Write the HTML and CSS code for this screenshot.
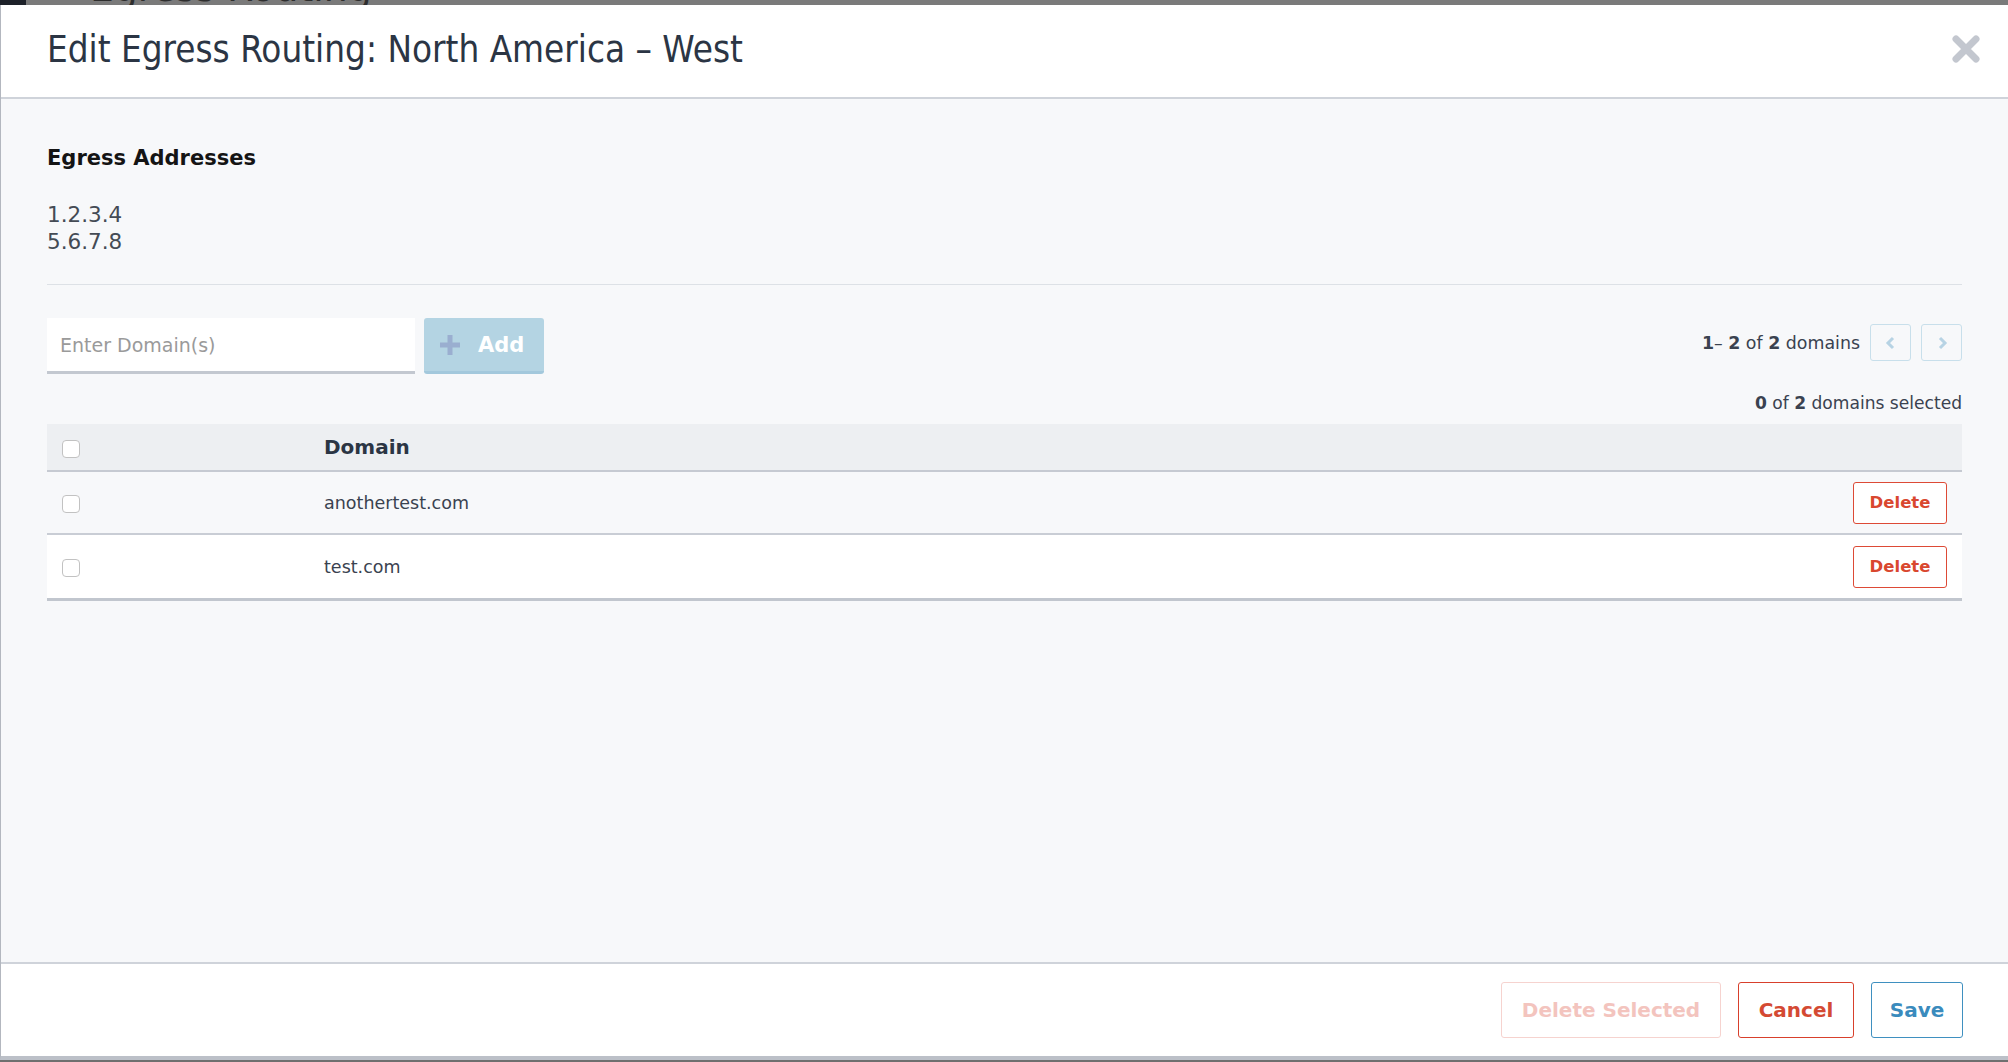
FILE: index.html
```html
<!DOCTYPE html>
<html lang="en">
<head>
<meta charset="utf-8">
<title>Edit Egress Routing</title>
<link rel="stylesheet" href="styles.css">
</head>
<body>
<div class="backdrop-strip">
  <span class="backdrop-block"></span>
  <span class="backdrop-title">Egress Routing</span>
</div>
<div class="modal">
  <header class="modal-header">
    <h1 class="modal-title">Edit Egress Routing: North America – West</h1>
    <button class="close-btn" aria-label="Close">
      <svg width="30" height="30" viewBox="0 0 30 30"><path d="M5 5 L25 25 M25 5 L5 25" stroke="#c3c7cf" stroke-width="7" stroke-linecap="round"/></svg>
    </button>
  </header>
  <main class="modal-body">
    <h2 class="section-title">Egress Addresses</h2>
    <div class="addresses">
      <div>1.2.3.4</div>
      <div>5.6.7.8</div>
    </div>
    <hr class="divider">
    <div class="toolbar">
      <div class="add-group">
        <input class="domain-input" type="text" placeholder="Enter Domain(s)">
        <button class="add-btn">
          <svg width="24" height="24" viewBox="0 0 24 24"><path d="M12 2 V22 M2 12 H22" stroke="#9aaed0" stroke-width="5"/></svg>
          <span>Add</span>
        </button>
      </div>
      <div class="pager">
        <span class="pager-text"><b>1</b>– <b>2</b> of <b>2</b> domains</span>
        <button class="pager-btn" aria-label="Previous">
          <svg width="12" height="14" viewBox="0 0 12 14"><path d="M8 2 L3 7 L8 12" fill="none" stroke="#b7d3e4" stroke-width="3"/></svg>
        </button>
        <button class="pager-btn" aria-label="Next">
          <svg width="12" height="14" viewBox="0 0 12 14"><path d="M4 2 L9 7 L4 12" fill="none" stroke="#b7d3e4" stroke-width="3"/></svg>
        </button>
      </div>
    </div>
    <div class="selection-count"><b>0</b> of <b>2</b> domains selected</div>
    <div class="table">
      <div class="row head">
        <div class="cell check"><span class="checkbox"></span></div>
        <div class="cell domain">Domain</div>
        <div class="cell action"></div>
      </div>
      <div class="row odd">
        <div class="cell check"><span class="checkbox"></span></div>
        <div class="cell domain">anothertest.com</div>
        <div class="cell action"><button class="btn-delete">Delete</button></div>
      </div>
      <div class="row even last">
        <div class="cell check"><span class="checkbox"></span></div>
        <div class="cell domain">test.com</div>
        <div class="cell action"><button class="btn-delete">Delete</button></div>
      </div>
    </div>
  </main>
  <footer class="modal-footer">
    <button class="btn btn-delete-selected">Delete Selected</button>
    <button class="btn btn-cancel">Cancel</button>
    <button class="btn btn-save">Save</button>
  </footer>
</div>
</body>
</html>
```
FILE: styles.css
```css
* { box-sizing: border-box; }
html, body { margin: 0; padding: 0; }
body {
  background: #6f6f6f;
  font-family: "DejaVu Sans", "Open Sans", sans-serif;
  height: 1062px;
  overflow: hidden;
}
.backdrop-strip {
  height: 5px;
  overflow: hidden;
  position: relative;
  background: #7a7a7a;
}
.backdrop-block {
  position: absolute;
  left: 0; top: 0;
  width: 26px; height: 5px;
  background: #1d2129;
}
.backdrop-title {
  position: absolute;
  left: 90px;
  top: -38px;
  font-size: 42px;
  color: #2e2e2e;
  font-family: "DejaVu Sans Condensed", "DejaVu Sans", sans-serif;
}
.modal {
  height: 1055px;
  display: flex;
  flex-direction: column;
  background: #f7f8fa;
  border-left: 1px solid #b3b7bf;
  border-bottom: 4px solid #bcc0c8;
}
.modal-header {
  height: 94px;
  flex: none;
  background: #fff;
  border-bottom: 2px solid #cfd3da;
  display: flex;
  align-items: center;
  justify-content: space-between;
  padding: 0 27px 4px 46px;
}
.modal-title {
  margin: 0;
  font-family: "DejaVu Sans Condensed", "DejaVu Sans", sans-serif;
  font-weight: normal;
  font-size: 36.5px;
  color: #2b3544;
}
.close-btn {
  border: 0;
  background: none;
  padding: 0;
  width: 30px;
  height: 30px;
  display: flex;
}
.modal-body {
  flex: 1;
  padding: 0 46px;
}
.section-title {
  margin: 47px 0 0;
  font-size: 21px;
  line-height: 24px;
  font-weight: bold;
  color: #141414;
}
.addresses {
  margin-top: 31px;
  font-size: 21.5px;
  line-height: 27px;
  color: #444b55;
}
.divider {
  margin: 29px 0 0;
  border: 0;
  border-top: 1px solid #dde1e6;
  height: 0;
}
.toolbar {
  margin-top: 33px;
  display: flex;
  justify-content: space-between;
  align-items: flex-start;
}
.add-group {
  display: flex;
  gap: 9px;
}
.domain-input {
  width: 368px;
  height: 56px;
  border: 0;
  border-bottom: 3px solid #c3c8d0;
  background: #fff;
  padding: 0 13px;
  font-family: inherit;
  font-size: 19px;
  color: #333;
  outline: none;
}
.domain-input::placeholder { color: #9a9a9a; }
.add-btn {
  width: 120px;
  height: 56px;
  border: 0;
  border-bottom: 3px solid #a3c8dc;
  border-radius: 3px;
  background: #b4d4e3;
  display: flex;
  align-items: center;
  gap: 16px;
  padding: 0 0 0 14px;
  font-family: inherit;
  font-weight: bold;
  font-size: 21px;
  color: #fff;
}
.pager {
  margin-top: 6px;
  display: flex;
  align-items: center;
  gap: 10px;
}
.pager-text {
  font-size: 17.4px;
  color: #3a4250;
}
.pager-btn {
  width: 41px;
  height: 37px;
  border: 1px solid #c8dfeb;
  border-radius: 3px;
  background: #f7f8fa;
  display: flex;
  align-items: center;
  justify-content: center;
  padding: 0;
}
.selection-count {
  margin-top: 19px;
  text-align: right;
  font-size: 17.1px;
  line-height: 20px;
  color: #3a4250;
}
.table {
  margin-top: 11px;
}
.row {
  display: flex;
  align-items: center;
}
.row.head {
  height: 48px;
  background: #edeff2;
  border-bottom: 2px solid #c6cad2;
}
.row.odd {
  height: 63px;
  background: #f7f8fa;
  border-bottom: 2px solid #c9cdd5;
}
.row.even {
  height: 66px;
  background: #fff;
  border-bottom: 3px solid #c1c6ce;
}
.cell.check {
  width: 277px;
  padding-left: 15px;
  display: flex;
  align-items: center;
}
.checkbox {
  width: 18px;
  height: 18px;
  border: 1px solid #c2c2c2;
  border-radius: 4px;
  background: #fff;
  display: block;
  margin-top: 3px;
}
.cell.domain {
  flex: 1;
  font-size: 17.5px;
  color: #3a4250;
}
.row.head .cell.domain {
  font-size: 20px;
  font-weight: bold;
  color: #2b3544;
}
.cell.action {
  padding-right: 15px;
}
.btn-delete {
  width: 94px;
  height: 42px;
  border: 1px solid #dd4a36;
  border-radius: 3px;
  background: #fff;
  color: #d9472f;
  font-family: inherit;
  font-weight: bold;
  font-size: 16.5px;
  padding: 0;
}
.modal-footer {
  height: 94px;
  flex: none;
  background: #fff;
  border-top: 2px solid #cfd3da;
  display: flex;
  align-items: center;
  justify-content: flex-end;
  gap: 17px;
  padding: 0 45px 0 0;
}
.btn {
  height: 56px;
  border-radius: 3px;
  background: #fff;
  font-family: inherit;
  font-weight: bold;
  font-size: 20px;
  padding: 0;
}
.btn-delete-selected {
  width: 220px;
  border: 1px solid #f6d3cf;
  color: #f3c4be;
}
.btn-cancel {
  width: 116px;
  border: 1px solid #d8402c;
  color: #d44a33;
}
.btn-save {
  width: 92px;
  border: 1px solid #3f90c0;
  color: #3a8bbd;
}
```
